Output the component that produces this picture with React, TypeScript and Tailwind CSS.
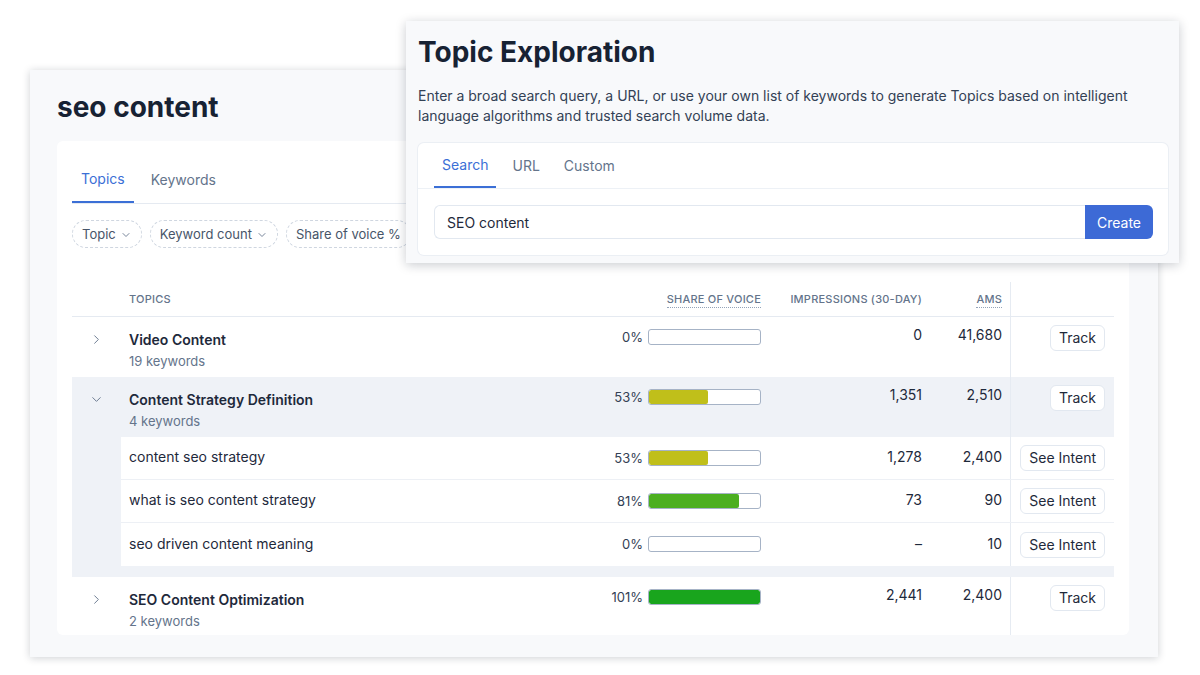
import { ChevronDown, ChevronRight } from "lucide-react";

type KeywordRow = {
  keyword: string;
  share: number;
  impressions: string;
  ams: string;
};

type TopicRow = {
  name: string;
  keywords: number;
  share: number;
  impressions: string;
  ams: string;
  expanded?: boolean;
  children?: KeywordRow[];
};

const topics: TopicRow[] = [
  { name: "Video Content", keywords: 19, share: 0, impressions: "0", ams: "41,680" },
  {
    name: "Content Strategy Definition",
    keywords: 4,
    share: 53,
    impressions: "1,351",
    ams: "2,510",
    expanded: true,
    children: [
      { keyword: "content seo strategy", share: 53, impressions: "1,278", ams: "2,400" },
      { keyword: "what is seo content strategy", share: 81, impressions: "73", ams: "90" },
      { keyword: "seo driven content meaning", share: 0, impressions: "–", ams: "10" },
    ],
  },
  { name: "SEO Content Optimization", keywords: 2, share: 101, impressions: "2,441", ams: "2,400" },
];

const barColor = (share: number) =>
  share >= 100 ? "bg-[#19a51d]" : share >= 70 ? "bg-[#4caf20]" : "bg-[#c0bf1a]";

const ShareBar = ({ share }: { share: number }) => (
  <div className="flex items-center justify-end gap-[5px]">
    <span className="text-[13px] leading-4 text-[#334155]">{share}%</span>
    <div className="h-4 w-[113px] overflow-hidden rounded-[3px] border border-[#a6b3c6] bg-white">
      {share > 0 && (
        <div
          className={`h-full rounded-[2px] ${barColor(share)}`}
          style={{ width: `${Math.min(share, 100)}%` }}
        />
      )}
    </div>
  </div>
);

const RowButton = ({ label }: { label: string }) => (
  <button className="h-[26px] rounded-md border border-[#e2e8f0] bg-white px-2 text-[14px] leading-5 text-[#1e293b]">
    {label}
  </button>
);

const TopicLine = ({ topic }: { topic: TopicRow }) => (
  <div className="flex h-[60px] items-stretch">
    <div className="flex w-[49px] shrink-0 justify-center pt-[15px] text-[#64748b]">
      {topic.expanded ? (
        <ChevronDown size={15} strokeWidth={1.5} />
      ) : (
        <ChevronRight size={15} strokeWidth={1.5} />
      )}
    </div>
    <div className="min-w-0 flex-1 pl-2 pt-[13px]">
      <div className="text-[14px] font-semibold leading-5 text-[#1e293b]">{topic.name}</div>
      <div className="mt-[3px] text-[13px] leading-4 text-[#64748b]">{topic.keywords} keywords</div>
    </div>
    <div className="w-[200px] shrink-0 pt-3">
      <ShareBar share={topic.share} />
    </div>
    <div className="w-[161px] shrink-0 pt-2 text-right text-[14px] leading-5 text-[#1e293b]">
      {topic.impressions}
    </div>
    <div className="w-[89px] shrink-0 border-r border-[#e6ebf2] pr-2 pt-2 text-right text-[14px] leading-5 text-[#1e293b]">
      {topic.ams}
    </div>
    <div className="flex w-[103px] shrink-0 items-start justify-end pr-[9px] pt-2">
      <RowButton label="Track" />
    </div>
  </div>
);

const KeywordLine = ({ row, last }: { row: KeywordRow; last: boolean }) => (
  <div className={`flex h-[43px] items-stretch bg-white ${last ? "" : "border-b border-[#edf0f5]"}`}>
    <div className="flex min-w-0 flex-1 items-center pb-[3px] pl-2 text-[14px] text-[#1e293b]">{row.keyword}</div>
    <div className="flex w-[200px] shrink-0 items-center justify-end pb-[1px]">
      <ShareBar share={row.share} />
    </div>
    <div className="flex w-[161px] shrink-0 items-center justify-end pb-[3px] text-[14px] text-[#1e293b]">
      {row.impressions}
    </div>
    <div className="flex w-[89px] shrink-0 items-center justify-end border-r border-[#e6ebf2] pb-[3px] pr-2 text-[14px] text-[#1e293b]">
      {row.ams}
    </div>
    <div className="flex w-[103px] shrink-0 items-center justify-end pr-[9px]">
      <RowButton label="See Intent" />
    </div>
  </div>
);

const FilterPill = ({ label, chevron = true }: { label: string; chevron?: boolean }) => (
  <div className="flex h-7 shrink-0 items-center gap-1 rounded-full border border-dashed border-[#cfd6e0] px-[9px] pt-[1px] text-[13px] text-[#475569]">
    <span>{label}</span>
    {chevron && <ChevronDown size={12} strokeWidth={1.75} className="text-[#64748b]" />}
  </div>
);

const App = () => {
  return (
    <div className="relative h-[675px] w-full overflow-hidden bg-white font-['Inter',sans-serif]">
      {/* main page card */}
      <div className="ml-[30px] mt-[70px] h-[587px] w-[1128px] bg-[#f8f9fb] px-[27px] pt-[19px] shadow-[0_1px_8px_rgba(15,23,42,0.2)]">
        <h1 className="text-[28px] font-bold leading-9 text-[#172233]">seo content</h1>
        <div className="mt-4 h-[494px] w-[1072px] overflow-hidden rounded-md bg-white p-[15px] pb-0">
          <div className="flex h-12 gap-2 border-b border-[#e5eaf1]">
            <div className="flex items-center border-b-2 border-[#3b6fd6] px-[9px] text-[14px] text-[#3b6fd6]">
              Topics
            </div>
            <div className="flex items-center px-[9px] text-[14px] text-[#64748b]">Keywords</div>
          </div>

          <div className="mt-4 flex gap-2">
            <FilterPill label="Topic" />
            <FilterPill label="Keyword count" />
            <FilterPill label="Share of voice %" chevron={false} />
          </div>

          <div className="mt-[34px]">
            <div className="flex h-[35px] items-stretch border-b border-[#e5eaf1] text-[11px] font-medium uppercase tracking-[0.02em] text-[#64748b]">
              <div className="w-[49px] shrink-0" />
              <div className="flex flex-1 items-center pl-2">Topics</div>
              <div className="flex w-[200px] shrink-0 items-center justify-end">
                <span className="border-b border-dotted border-[#94a3b8] leading-4">Share of voice</span>
              </div>
              <div className="flex w-[161px] shrink-0 items-center justify-end">
                <span className="leading-4">Impressions (30-day)</span>
              </div>
              <div className="flex w-[89px] shrink-0 items-center justify-end border-r border-[#e6ebf2] pr-2">
                <span className="border-b border-dotted border-[#94a3b8] leading-4">AMS</span>
              </div>
              <div className="w-[103px] shrink-0" />
            </div>

            {topics.map((topic) =>
              topic.expanded ? (
                <div key={topic.name} className="bg-[#eff2f7] pb-[11px]">
                  <TopicLine topic={topic} />
                  <div className="ml-[49px]">
                    {topic.children?.map((row, i) => (
                      <KeywordLine
                        key={row.keyword}
                        row={row}
                        last={i === (topic.children?.length ?? 0) - 1}
                      />
                    ))}
                  </div>
                </div>
              ) : (
                <TopicLine key={topic.name} topic={topic} />
              )
            )}
          </div>
        </div>
      </div>

      {/* topic exploration overlay */}
      <div className="absolute left-[406px] top-[21px] h-[242px] w-[773px] bg-[#f8f9fb] pl-3 pr-[11px] pt-[13px] shadow-[0_2px_10px_rgba(15,23,42,0.22)]">
        <h2 className="text-[28px] font-bold leading-9 text-[#172233]">Topic Exploration</h2>
        <p className="mt-4 text-[14px] leading-5 text-[#334155]">
          Enter a broad search query, a URL, or use your own list of keywords to generate Topics based on
          intelligent language algorithms and trusted search volume data.
        </p>
        <div className="mt-[17px] rounded-md bg-white shadow-[0_0_0_1px_rgba(226,232,240,0.6)]">
          <div className="flex h-[46px] gap-2 border-b border-[#edf1f6] px-4">
            <div className="flex items-center border-b-2 border-[#3b6fd6] px-2 text-[14px] text-[#3b6fd6]">
              Search
            </div>
            <div className="flex items-center px-2 text-[14px] text-[#64748b]">URL</div>
            <div className="flex items-center px-2 text-[14px] text-[#64748b]">Custom</div>
          </div>
          <div className="flex p-4 pr-[15px]">
            <div className="flex h-[34px] flex-1 items-center rounded-l-md border border-r-0 border-[#e2e8f0] px-3 text-[14px] text-[#1e293b]">
              SEO content
            </div>
            <button className="h-[34px] w-[68px] rounded-r-md bg-[#3d6ad6] text-[14px] text-white">Create</button>
          </div>
        </div>
      </div>
    </div>
  );
};

export default App;
